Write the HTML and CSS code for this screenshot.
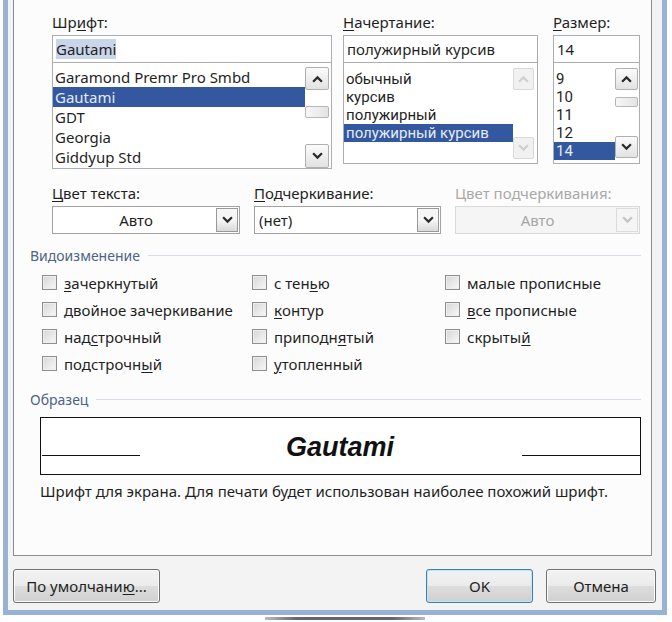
FILE: index.html
```html
<!DOCTYPE html>
<html lang="ru">
<head>
    <meta charset="UTF-8">
    <title>Шрифт</title>
    <link rel="stylesheet" href="styles.css">
</head>
<body>
<div class="window">
  <div class="dialog">
    <div class="page">

      <!-- font / style / size -->
      <div class="font-row">
        <div class="col col-font">
          <div class="label">Шр<u>и</u>фт:</div>
          <div class="input"><span class="hl">Gautami</span></div>
          <div class="list list-font">
            <div class="items">
              <div class="item">Garamond Premr Pro Smbd</div>
              <div class="item sel">Gautami</div>
              <div class="item">GDT</div>
              <div class="item">Georgia</div>
              <div class="item">Giddyup Std</div>
            </div>
            <div class="scroll scroll-font">
              <div class="sbtn up"><svg viewBox="0 0 10 7"><polyline points="1,6 5,2 9,6"/></svg></div>
              <div class="thumb"></div>
              <div class="sbtn down"><svg viewBox="0 0 10 7"><polyline points="1,1 5,5 9,1"/></svg></div>
            </div>
          </div>
        </div>

        <div class="col col-style">
          <div class="label"><u>Н</u>ачертание:</div>
          <div class="input">полужирный курсив</div>
          <div class="list list-small">
            <div class="items">
              <div class="item">обычный</div>
              <div class="item">курсив</div>
              <div class="item">полужирный</div>
              <div class="item sel">полужирный курсив</div>
            </div>
            <div class="scroll scroll-style off">
              <div class="sbtn up"><svg viewBox="0 0 10 7"><polyline points="1,6 5,2 9,6"/></svg></div>
              <div class="sbtn down"><svg viewBox="0 0 10 7"><polyline points="1,1 5,5 9,1"/></svg></div>
            </div>
          </div>
        </div>

        <div class="col col-size">
          <div class="label"><u>Р</u>азмер:</div>
          <div class="input">14</div>
          <div class="list list-small">
            <div class="items">
              <div class="item">9</div>
              <div class="item">10</div>
              <div class="item">11</div>
              <div class="item">12</div>
              <div class="item sel">14</div>
            </div>
            <div class="scroll scroll-size">
              <div class="sbtn up"><svg viewBox="0 0 10 7"><polyline points="1,6 5,2 9,6"/></svg></div>
              <div class="thumb"></div>
              <div class="sbtn down"><svg viewBox="0 0 10 7"><polyline points="1,1 5,5 9,1"/></svg></div>
            </div>
          </div>
        </div>
      </div>

      <!-- colour / underline -->
      <div class="color-row">
        <div>
          <div class="label"><u>Ц</u>вет текста:</div>
          <div class="select">
            <div class="value center">Авто</div>
            <div class="drop"><svg viewBox="0 0 10 7"><polyline points="1,1 5,5 9,1"/></svg></div>
          </div>
        </div>
        <div>
          <div class="label"><u>П</u>одчеркивание:</div>
          <div class="select">
            <div class="value">(нет)</div>
            <div class="drop"><svg viewBox="0 0 10 7"><polyline points="1,1 5,5 9,1"/></svg></div>
          </div>
        </div>
        <div>
          <div class="label muted">Цвет подчеркивания:</div>
          <div class="select disabled">
            <div class="value center">Авто</div>
            <div class="drop"><svg viewBox="0 0 10 7"><polyline points="1,1 5,5 9,1"/></svg></div>
          </div>
        </div>
      </div>

      <!-- effects -->
      <div class="group-title">Видоизменение</div>
      <div class="checks">
        <div class="check"><span class="box"></span><u>з</u>ачеркнутый</div>
        <div class="check"><span class="box"></span>с тен<u>ь</u>ю</div>
        <div class="check"><span class="box"></span>малые прописные</div>
        <div class="check"><span class="box"></span><u>д</u>войное зачеркивание</div>
        <div class="check"><span class="box"></span><u>к</u>онтур</div>
        <div class="check"><span class="box"></span><u>в</u>се прописные</div>
        <div class="check"><span class="box"></span>над<u>с</u>трочный</div>
        <div class="check"><span class="box"></span>приподн<u>я</u>тый</div>
        <div class="check"><span class="box"></span>скрыты<u>й</u></div>
        <div class="check"><span class="box"></span>подстрочн<u>ы</u>й</div>
        <div class="check"><span class="box"></span><u>у</u>топленный</div>
      </div>

      <!-- sample -->
      <div class="group-title sample-title">Образец</div>
      <div class="preview">
        <div class="rule rule-left"></div>
        <div class="sample-text">Gautami</div>
        <div class="rule rule-right"></div>
      </div>
      <div class="note">Шрифт для экрана. Для печати будет использован наиболее похожий шрифт.</div>
    </div>

    <div class="buttons">
      <button class="btn btn-default">По умолчани<u>ю</u>...</button>
      <button class="btn btn-ok">OK</button>
      <button class="btn btn-cancel">Отмена</button>
    </div>
  </div>
</div>
<div class="behind"></div>
</body>
</html>
```

FILE: styles.css
```css
* {
    box-sizing: border-box;
}

body {
    margin: 0;
    background: #fff;
    font-family: "Noto Sans", "DejaVu Sans", sans-serif;
    font-size: 15px;
    color: #1f1f1f;
}

u {
    text-decoration-thickness: 1px;
    text-underline-offset: 2px;
}

.window {
    width: 664px;
    margin-left: 3px;
    border: 5px solid #98b2d4;
    border-top: none;
    background: #f3f3f3;
}

.dialog {
    padding: 0 6px 7px 5px;
}

.page {
    height: 556px;
    margin-right: 4px;
    padding: 12px 10px 0 16px;
    border: 1px solid #8c8e94;
    border-top: none;
    background: #fcfcfc;
}

/* top row */
.font-row {
    display: flex;
    margin-left: 22px;
}

.col-font { width: 280px; }
.col-style { width: 195px; margin-left: 11px; }
.col-size { width: 87px; margin-left: 15px; }

.label {
    height: 20px;
    line-height: 20px;
    margin-bottom: 3px;
    white-space: nowrap;
}

.label.muted {
    color: #a9a9a9;
}

.input {
    height: 28px;
    padding-left: 3px;
    line-height: 26px;
    border: 1px solid #abadb3;
    background: #fff;
    white-space: nowrap;
}

.hl {
    background: #c9d5e8;
}

.list {
    display: flex;
    height: 101px;
    border: 1px solid #abadb3;
    border-top: none;
    background: #fff;
}

.list-font {
    height: 106px;
}

.items {
    flex: 1;
    padding-top: 7px;
    overflow: hidden;
}

.list-font .items {
    padding-top: 4px;
}

.item {
    height: 18px;
    line-height: 18px;
    padding-left: 2px;
    white-space: nowrap;
}

.list-small .item {
    font-family: Roboto, "Noto Sans", sans-serif;
}

.list-font .item {
    height: 20px;
    line-height: 20px;
}

.item.sel {
    background: #33589f;
    color: #e6ebf5;
}

/* scrollbars */
.scroll {
    display: flex;
    flex-direction: column;
}

.scroll-font { width: 24px; margin: 4px 2px 0 0; }
.scroll-style { width: 21px; margin: 5px 3px 4px 0; }
.scroll-size { width: 23px; margin: 5px 1px 5px 0; }

.sbtn {
    height: 22px;
    display: flex;
    align-items: center;
    justify-content: center;
    border: 1px solid #b0b0b0;
    border-radius: 2px;
    background: linear-gradient(#fbfbfb, #e2e2e2);
}

.scroll-font .up { height: 23px; }
.scroll-font .down { height: 24px; }

.sbtn.down {
    margin-top: auto;
}

.sbtn svg,
.drop svg {
    width: 11px;
    height: 8px;
    fill: none;
    stroke: #2a2a2a;
    stroke-width: 2;
}

.thumb {
    height: 12px;
    margin-top: 16px;
    border: 1px solid #b6b6b6;
    border-radius: 2px;
    background: linear-gradient(90deg, #f7f7f7, #e4e4e4);
}

.scroll-size .thumb {
    height: 10px;
    margin-top: 7px;
}

.scroll.off .sbtn {
    border-color: #d9d9d9;
    background: #f1f1f1;
}

.scroll.off svg {
    stroke: #cfcfcf;
}

/* second row */
.color-row {
    display: grid;
    grid-template-columns: 188px 187px 185px;
    column-gap: 14px;
    margin: 14px 0 0 22px;
}

.select {
    display: flex;
    height: 28px;
    border: 1px solid #a2a2a2;
    background: #fff;
}

.select .value {
    flex: 1;
    padding-left: 4px;
    line-height: 26px;
}

.select .value.center {
    text-align: center;
}

.drop {
    width: 22px;
    margin: 1px;
    padding-top: 7px;
    display: flex;
    justify-content: center;
    border: 1px solid #999;
    background: linear-gradient(#f6f6f6 50%, #d9d9d9);
}

.select.disabled {
    border-color: #dadada;
    background: #f5f5f5;
    color: #a6a6a6;
}

.select.disabled .drop {
    border-color: #dcdcdc;
    background: #f5f5f5;
}

.select.disabled svg {
    stroke: #c4c4c4;
}

/* groups */
.group-title {
    display: flex;
    align-items: center;
    height: 18px;
    margin-top: 12px;
    font-size: 14px;
    color: #4d6488;
}

.group-title::after {
    content: "";
    flex: 1;
    margin-left: 8px;
    border-top: 1px solid #d6dde6;
}

.checks {
    display: grid;
    grid-template-columns: 210px 193px 1fr;
    grid-auto-rows: 27px;
    margin: 5px 0 0 12px;
}

.check {
    display: flex;
    align-items: center;
    white-space: nowrap;
}

.box {
    flex-shrink: 0;
    width: 15px;
    height: 15px;
    margin-right: 7px;
    border: 1px solid #8e8f8f;
    background: linear-gradient(135deg, #d6d6d6, #f8f8f8);
    box-shadow: inset 0 0 0 1px #eeeeee;
}

.sample-title {
    margin-top: 13px;
}

.preview {
    display: flex;
    align-items: baseline;
    height: 58px;
    margin: 9px 0 0 10px;
    padding: 13px 0 0 1px;
    border: 1px solid #111;
    background: #fff;
}

.rule {
    height: 1px;
    background: #111;
}

.rule-left { width: 98px; }

.rule-right {
    width: 118px;
    margin-left: auto;
}

.sample-text {
    margin-left: 146px;
    font-family: "Liberation Sans", Arial, sans-serif;
    font-size: 27px;
    font-weight: bold;
    font-style: italic;
    line-height: 32px;
    color: #111;
}

.note {
    margin: 6px 0 0 10px;
    line-height: 20px;
    white-space: nowrap;
}

/* buttons */
.buttons {
    display: flex;
    margin-top: 13px;
}

.btn {
    height: 34px;
    padding: 0;
    font: inherit;
    color: inherit;
    border: 1px solid #707070;
    border-radius: 3px;
    background: linear-gradient(#f2f2f2 0%, #ebebeb 50%, #dddddd 51%, #cfcfcf 100%);
    box-shadow: inset 0 0 0 1px #fbfbfb;
}

.btn-default { width: 147px; }

.btn-ok {
    width: 107px;
    margin-left: auto;
    border-color: #3c7fb1;
    box-shadow: inset 0 0 0 1px #c4e3f6;
}

.btn-cancel {
    width: 110px;
    margin-left: 13px;
}

/* blurred bit of the window behind the dialog */
.behind {
    width: 160px;
    height: 3px;
    margin: 2px 0 0 265px;
    background: linear-gradient(90deg, #bbb, #666 20%, #666 80%, #bbb);
}
```
